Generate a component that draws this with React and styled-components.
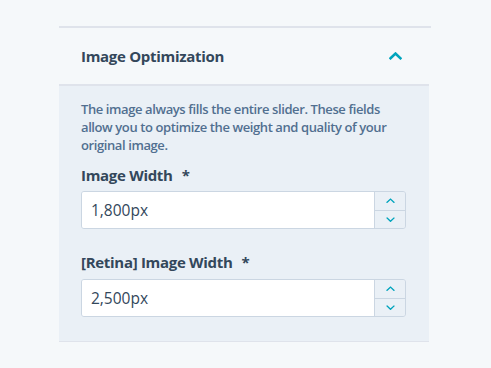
import React from "react";
import styled, { createGlobalStyle } from "styled-components";

const GlobalStyle = createGlobalStyle`
  html, body {
    margin: 0;
    padding: 0;
    background: #f5f8fa;
  }
  body {
    font-family: "Open Sans", "Liberation Sans", sans-serif;
    color: #33475b;
  }
`;

const Page = styled.div`
  width: 491px;
  height: 368px;
  padding: 26px 60px 0 59px;
  box-sizing: border-box;
`;

const Section = styled.div`
  width: 372px;
  border-top: 2px solid #dfe3eb;
`;

const Header = styled.div`
  height: 58px;
  display: flex;
  align-items: center;
  justify-content: space-between;
  padding: 0 27px 0 22px;
  border-bottom: 2px solid #dfe3eb;
  width: 370px;
  box-sizing: border-box;
`;

const Title = styled.div`
  font-size: 15px;
  font-weight: 700;
  color: #33475b;
  letter-spacing: -0.3px;
`;

const Body = styled.div`
  width: 370px;
  box-sizing: border-box;
  background: #eaf0f6;
  padding: 14px 23px 24px 22px;
  border-bottom: 1px solid #dfe3eb;
`;

const Help = styled.p`
  margin: 0 0 11px;
  font-size: 13px;
  line-height: 18px;
  font-weight: 600;
  letter-spacing: -0.4px;
  color: #516f90;
`;

const Field = styled.div`
  margin-bottom: ${(p) => p.gap || 0}px;
`;

const Label = styled.div`
  font-size: 15px;
  font-weight: 700;
  letter-spacing: -0.3px;
  color: #33475b;
  line-height: 20px;
  margin-bottom: ${(p) => p.space}px;

  span {
    margin-left: 9px;
  }
`;

const InputRow = styled.div`
  display: flex;
  height: 38px;
  border: 1px solid #cbd6e2;
  border-radius: 3px;
  box-sizing: border-box;
  overflow: hidden;
`;

const Input = styled.input`
  flex: 1;
  min-width: 0;
  border: none;
  outline: none;
  background: #fff;
  font-family: inherit;
  font-size: 15.5px;
  color: #33475b;
  padding: 0 9px;
`;

const Stepper = styled.div`
  width: 30px;
  display: flex;
  flex-direction: column;
  border-left: 1px solid #cbd6e2;
  background: #eaf0f6;
`;

const StepButton = styled.button`
  flex: 1;
  border: none;
  padding: 0;
  background: transparent;
  display: flex;
  align-items: center;
  justify-content: center;
  border-top: ${(p) => (p.down ? "1px solid #cbd6e2" : "none")};
`;

const Chevron = ({ down, width = 10, stroke = 2 }) => (
  <svg width={width} height={width * 0.6} viewBox="0 0 10 6">
    <path
      d={down ? "M1.2 1.2 L5 4.8 L8.8 1.2" : "M1.2 4.8 L5 1.2 L8.8 4.8"}
      fill="none"
      stroke="#00a4bd"
      strokeWidth={stroke}
      strokeLinecap="square"
    />
  </svg>
);

const NumberField = ({ label, value, gap, space }) => (
  <Field gap={gap}>
    <Label space={space}>
      {label}
      <span>*</span>
    </Label>
    <InputRow>
      <Input defaultValue={value} />
      <Stepper>
        <StepButton>
          <Chevron width={9} stroke={1.5} />
        </StepButton>
        <StepButton down>
          <Chevron down width={9} stroke={1.5} />
        </StepButton>
      </Stepper>
    </InputRow>
  </Field>
);

export default function App() {
  return (
    <>
      <GlobalStyle />
      <Page>
        <Section>
          <Header>
            <Title>Image Optimization</Title>
            <Chevron width={13} stroke={2} />
          </Header>
          <Body>
            <Help>
              The image always fills the entire slider. These fields allow you
              to optimize the weight and quality of your original image.
            </Help>
            <NumberField label="Image Width" value="1,800px" gap={23} space={6} />
            <NumberField label="[Retina] Image Width" value="2,500px" space={7} />
          </Body>
        </Section>
      </Page>
    </>
  );
}
